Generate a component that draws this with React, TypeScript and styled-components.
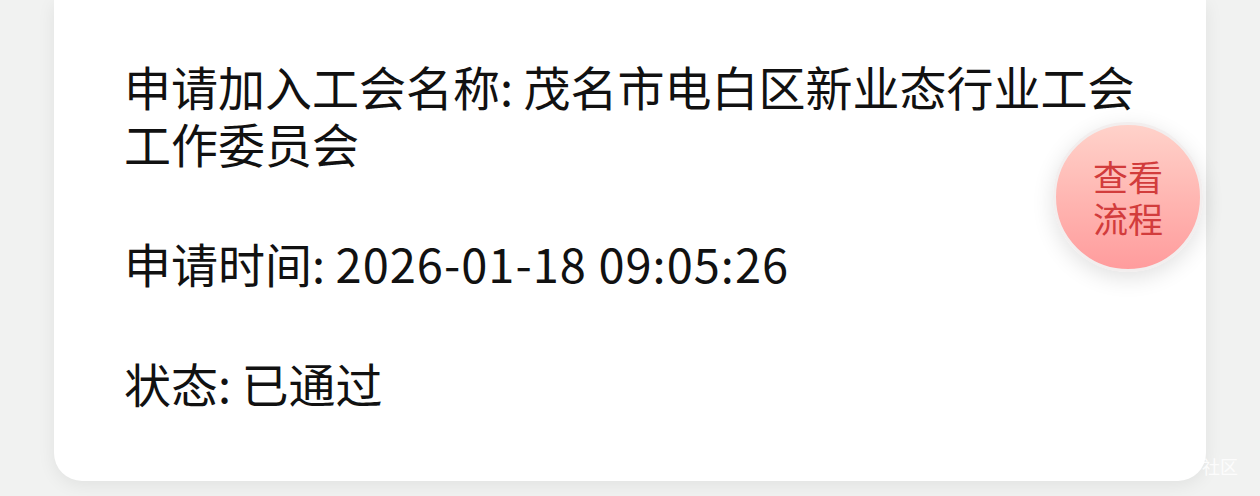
import { FC } from "react";
import styled, { createGlobalStyle } from "styled-components";

const GlobalStyle = createGlobalStyle`
  html, body {
    margin: 0;
    padding: 0;
    background: #f1f2f1;
  }

  body {
    font-family: "Noto Sans CJK SC", "Noto Sans", sans-serif;
    color: #111;
  }
`;

const details = [
  { label: "申请加入工会名称", value: "茂名市电白区新业态行业工会工作委员会", numeric: false },
  { label: "申请时间", value: "2026-01-18 09:05:26", numeric: true },
  { label: "状态", value: "已通过", numeric: false },
];

const App: FC = () => {
  return (
    <>
      <GlobalStyle />
      <Page>
        <Card>
          {details.map((item) => (
            <Row key={item.label}>
              {item.label}: <Value $numeric={item.numeric}>{item.value}</Value>
            </Row>
          ))}
          <FlowButton type="button">
            查看
            <br />
            流程
          </FlowButton>
        </Card>
        <Watermark>社区</Watermark>
      </Page>
    </>
  );
};

const Page = styled.div`
  position: relative;
  box-sizing: border-box;
  width: 1260px;
  height: 496px;
  padding: 0 54px;
  overflow: hidden;
`;

const Card = styled.div`
  position: relative;
  box-sizing: border-box;
  height: 481px;
  padding: 57px 60px 0 70px;
  background: #fff;
  border-radius: 0 0 28px 28px;
  box-shadow: 0 4px 18px rgba(0, 0, 0, 0.07);
`;

const Row = styled.p`
  margin: 0 0 63px;
  font-size: 47px;
  line-height: 57px;
`;

const Value = styled.span<{ $numeric: boolean }>`
  letter-spacing: ${(p) => (p.$numeric ? "1px" : "0")};
`;

const FlowButton = styled.button`
  position: absolute;
  top: 122px;
  right: 3px;
  width: 150px;
  height: 150px;
  padding: 0;
  border: 3px solid #f2eeee;
  border-radius: 50%;
  background: linear-gradient(180deg, #ffd2ca 0%, #ffb4b0 55%, #ff9c9d 100%);
  box-shadow: 0 6px 22px rgba(0, 0, 0, 0.12);
  color: #d23c3c;
  font-family: "Noto Sans CJK SC", sans-serif;
  font-size: 35px;
  line-height: 42px;
  cursor: pointer;
`;

const Watermark = styled.span`
  position: absolute;
  right: 22px;
  bottom: 20px;
  color: rgba(255, 255, 255, 0.85);
  font-size: 18px;
  line-height: 20px;
`;

export default App;
